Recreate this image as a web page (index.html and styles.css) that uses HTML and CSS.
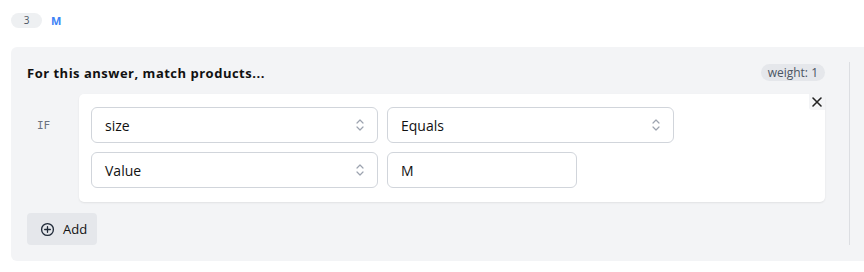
FILE: index.html
```html
<!DOCTYPE html>
<html>
<head>
<meta charset="utf-8">
<link rel="stylesheet" href="styles.css">
</head>
<body>
<div class="top">
  <span class="num">3</span>
  <span class="val">M</span>
</div>
<div class="panel">
  <div class="content">
    <div class="head">
      <span class="title">For this answer, match products...</span>
      <span class="weight">weight: 1</span>
    </div>
    <div class="card">
      <div class="iflabel">IF</div>
      <div class="rows">
        <div class="row">
          <div class="field select"><span>size</span>
            <svg class="chev" viewBox="0 0 10 16" width="10" height="16"><path d="M2 6 L5 3 L8 6 M2 10 L5 13 L8 10" fill="none" stroke="#9ca3af" stroke-width="1.2" stroke-linecap="round" stroke-linejoin="round"/></svg>
          </div>
          <div class="field select"><span>Equals</span>
            <svg class="chev" viewBox="0 0 10 16" width="10" height="16"><path d="M2 6 L5 3 L8 6 M2 10 L5 13 L8 10" fill="none" stroke="#9ca3af" stroke-width="1.2" stroke-linecap="round" stroke-linejoin="round"/></svg>
          </div>
        </div>
        <div class="row">
          <div class="field select"><span>Value</span>
            <svg class="chev" viewBox="0 0 10 16" width="10" height="16"><path d="M2 6 L5 3 L8 6 M2 10 L5 13 L8 10" fill="none" stroke="#9ca3af" stroke-width="1.2" stroke-linecap="round" stroke-linejoin="round"/></svg>
          </div>
          <div class="field input"><span>M</span></div>
        </div>
      </div>
      <button class="close" type="button">
        <svg viewBox="0 0 12 12" width="12" height="12"><path d="M2 2 L10 10 M10 2 L2 10" stroke="#222" stroke-width="1.6" stroke-linecap="round"/></svg>
      </button>
    </div>
    <button class="add" type="button">
      <svg viewBox="0 0 16 16" width="15" height="15"><circle cx="8" cy="8" r="6.3" fill="none" stroke="#1f2937" stroke-width="1.4"/><path d="M8 5 V11 M5 8 H11" stroke="#1f2937" stroke-width="1.4" stroke-linecap="round"/></svg>
      <span>Add</span>
    </button>
  </div>
  <div class="vline"></div>
</div>
</body>
</html>
```

FILE: styles.css
```css
* { box-sizing: border-box; }
html, body { margin: 0; padding: 0; background: #fff; }
body {
  font-family: "Open Sans", "Liberation Sans", sans-serif;
  color: #111827;
  padding-top: 13px;
}
.top {
  display: flex;
  align-items: center;
  gap: 9px;
  padding-left: 11px;
  height: 15px;
}
.num {
  width: 31px;
  height: 15px;
  border-radius: 8px;
  background: #eef0f2;
  color: #4b5563;
  font-size: 10px;
  line-height: 15px;
  text-align: center;
}
.val {
  color: #3b82f6;
  font-size: 11px;
  font-weight: 700;
}
.panel {
  margin: 19px 0 0 11px;
  background: #f3f4f6;
  border-radius: 6px 0 0 6px;
  padding: 17px 0 16px 16px;
  display: flex;
  height: 214px;
}
.content {
  width: 798px;
  display: flex;
  flex-direction: column;
  align-items: flex-start;
}
.head {
  width: 100%;
  height: 17px;
  display: flex;
  align-items: center;
  justify-content: space-between;
}
.title {
  font-size: 13px;
  font-weight: 700;
  letter-spacing: 0.5px;
  color: #111;
}
.weight {
  background: #e5e7eb;
  color: #4b5563;
  font-size: 12px;
  height: 17px;
  line-height: 17px;
  padding: 0 7px;
  border-radius: 9px;
}
.card {
  position: relative;
  margin: 13px 0 0 52px;
  width: 746px;
  background: #fff;
  border-radius: 5px;
  box-shadow: 0 1px 2px rgba(0,0,0,0.08);
  padding: 13px 12px 14px 12px;
  display: flex;
}
.iflabel {
  position: absolute;
  left: -42px;
  top: 25px;
  font-family: "DejaVu Sans Mono", "Liberation Mono", monospace;
  font-size: 11px;
  color: #6b7280;
}
.rows {
  display: flex;
  flex-direction: column;
  gap: 9px;
}
.row {
  display: flex;
  gap: 9px;
}
.field {
  height: 36px;
  border: 1px solid #d1d5db;
  border-radius: 6px;
  background: #fff;
  display: flex;
  align-items: center;
  justify-content: space-between;
  padding: 0 12px 0 13px;
  font-size: 14px;
  font-weight: 500;
  color: #111;
}
.select { width: 287px; }
.input { width: 190px; }
.chev { display: block; }
.close {
  position: absolute;
  top: 0;
  right: 0;
  width: 16px;
  height: 16px;
  border: 0;
  padding: 0;
  background: #f3f4f6;
  display: flex;
  align-items: center;
  justify-content: center;
  border-radius: 0 4px 0 3px;
}
.add {
  margin-top: 11px;
  width: 70px;
  height: 32px;
  border: 0;
  border-radius: 4px;
  background: #e5e7eb;
  display: flex;
  align-items: center;
  gap: 8px;
  padding: 0 0 0 13px;
  font-family: inherit;
  font-size: 13px;
  font-weight: 500;
  color: #111;
}
.add svg { display: block; }
.vline {
  margin-left: 24px;
  width: 1px;
  background: #dcdee2;
  margin-top: -2px;
}
```
